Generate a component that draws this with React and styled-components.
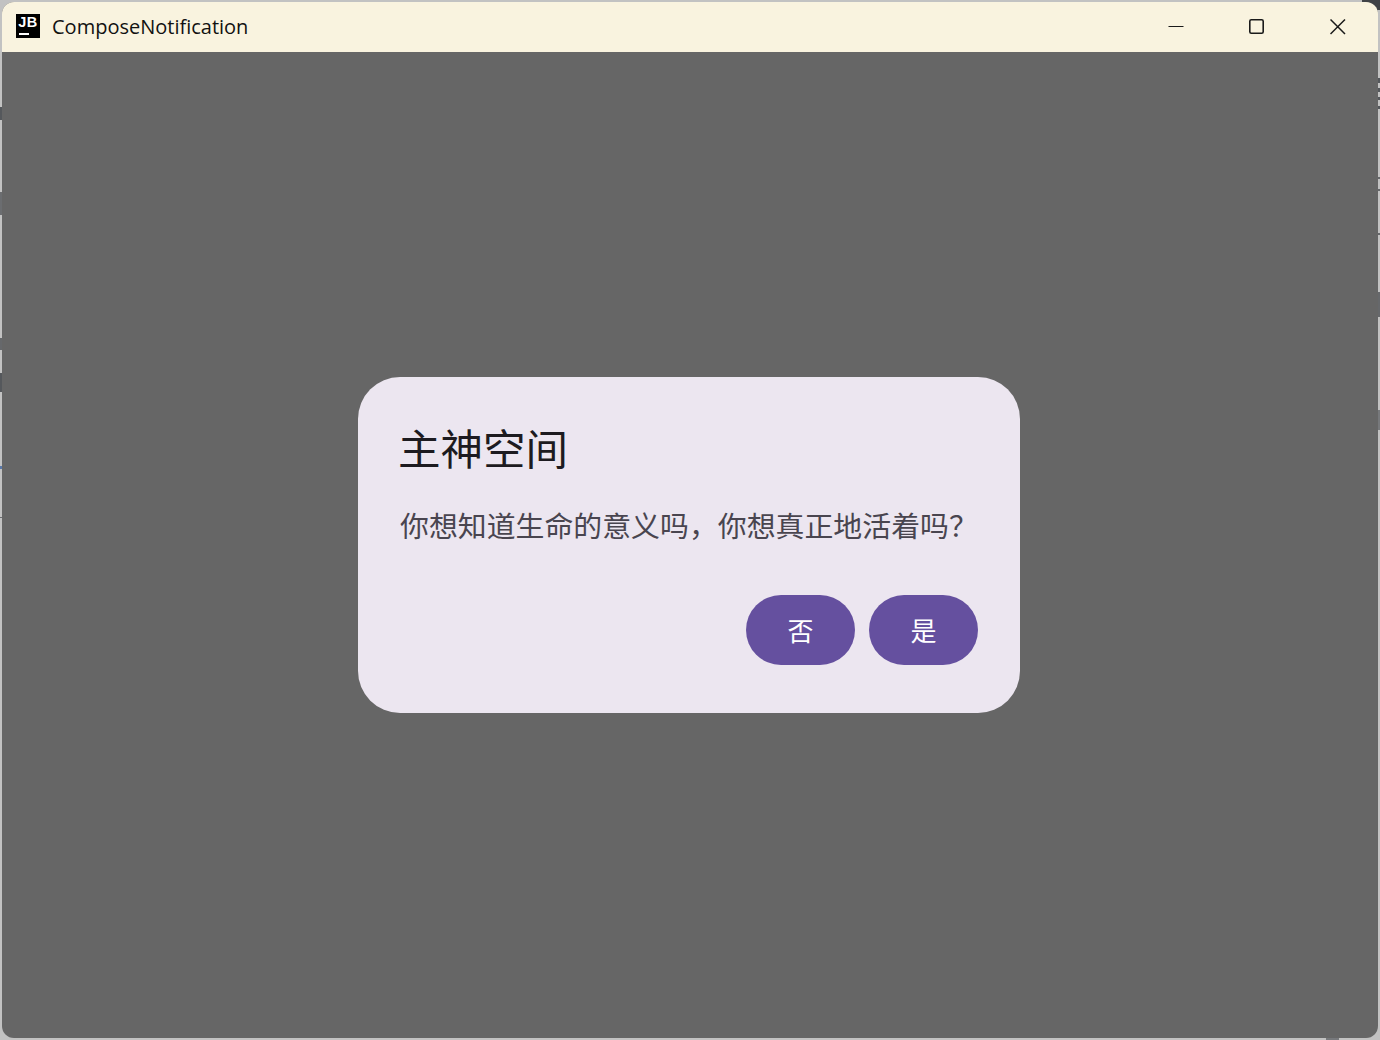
import styled, { createGlobalStyle } from "styled-components";

const cjk = `"Noto Sans CJK SC", "Noto Sans", sans-serif`;

// bits of the desktop that show around the window edge
const edgeSpecks = [
  { left: 0, top: 107, width: 2, height: 13, color: "#55585c" },
  { left: 0, top: 192, width: 2, height: 23, color: "#6b6d70" },
  { left: 0, top: 338, width: 2, height: 12, color: "#66686b" },
  { left: 0, top: 373, width: 2, height: 19, color: "#55585c" },
  { left: 0, top: 466, width: 2, height: 3, color: "#5a78a8" },
  { left: 0, top: 517, width: 2, height: 1, color: "#6b6d70" },
  { left: 1378, top: 78, width: 2, height: 5, color: "#55585c" },
  { left: 1378, top: 88, width: 2, height: 4, color: "#55585c" },
  { left: 1378, top: 97, width: 2, height: 3, color: "#55585c" },
  { left: 1378, top: 106, width: 2, height: 3, color: "#55585c" },
  { left: 1378, top: 177, width: 2, height: 2, color: "#66686b" },
  { left: 1378, top: 189, width: 2, height: 2, color: "#66686b" },
  { left: 1378, top: 233, width: 2, height: 2, color: "#66686b" },
  { left: 1378, top: 292, width: 2, height: 25, color: "#66686b" },
  { left: 1378, top: 410, width: 2, height: 20, color: "#77797c" },
  { left: 1326, top: 1038, width: 13, height: 2, color: "#77797c" },
];

const App = () => {
  return (
    <Page>
      <GlobalStyle />
      {edgeSpecks.map((s) => (
        <EdgeSpeck
          key={`${s.left}-${s.top}`}
          style={{ left: s.left, top: s.top, width: s.width, height: s.height, background: s.color }}
        />
      ))}
      <CornerSpeck />
      <Window>
        <TitleBar>
          <AppLogo>
            <LogoText>JB</LogoText>
            <LogoBar />
          </AppLogo>
          <WindowTitle>ComposeNotification</WindowTitle>
          <WindowControls>
            <ControlButton aria-label="minimize">
              <svg width="16" height="16" viewBox="0 0 16 16">
                <path d="M0.5 7.5H15.5" stroke="#1a1a1a" strokeWidth="1.2" fill="none" />
              </svg>
            </ControlButton>
            <ControlButton aria-label="maximize">
              <svg width="16" height="16" viewBox="0 0 16 16">
                <rect x="0.8" y="0.8" width="13.4" height="13.4" rx="1.5" stroke="#1a1a1a" strokeWidth="1.6" fill="none" />
              </svg>
            </ControlButton>
            <ControlButton aria-label="close">
              <svg width="16" height="16" viewBox="0 0 16 16">
                <path d="M0.5 0.5L15 15M15 0.5L0.5 15" stroke="#1a1a1a" strokeWidth="1.5" fill="none" />
              </svg>
            </ControlButton>
          </WindowControls>
        </TitleBar>
        <Scrim>
          <Dialog>
            <DialogTitle>主神空间</DialogTitle>
            <DialogBody>你想知道生命的意义吗，你想真正地活着吗？</DialogBody>
            <DialogActions>
              <ActionButton>否</ActionButton>
              <ActionButton>是</ActionButton>
            </DialogActions>
          </Dialog>
        </Scrim>
      </Window>
    </Page>
  );
};

export default App;

const GlobalStyle = createGlobalStyle`
  html, body {
    margin: 0;
    padding: 0;
    background: #c2c2c2;
  }
`;

const Page = styled.div`
  position: relative;
  width: 1380px;
  height: 1040px;
  box-sizing: border-box;
  padding: 2px;
  background: #c2c2c2;
  overflow: hidden;
`;

const EdgeSpeck = styled.span`
  position: absolute;
`;

const CornerSpeck = styled.span`
  position: absolute;
  top: 0;
  right: 0;
  width: 18px;
  height: 10px;
  background: #3f4246;
`;

const Window = styled.div`
  position: relative;
  width: 100%;
  height: 100%;
  display: flex;
  flex-direction: column;
  border-radius: 12px;
  overflow: hidden;
  background: #666666;
`;

const TitleBar = styled.div`
  height: 50px;
  flex: none;
  display: flex;
  align-items: center;
  padding-left: 14px;
  background: #f9f3df;
`;

const AppLogo = styled.div`
  width: 24px;
  height: 24px;
  flex: none;
  display: flex;
  flex-direction: column;
  padding: 3px 2px 0;
  box-sizing: border-box;
  background: #000000;
  margin-top: -2px;
`;

const LogoText = styled.span`
  font-family: "Liberation Sans", sans-serif;
  font-size: 14.5px;
  font-weight: 700;
  line-height: 11px;
  letter-spacing: 0.6px;
  color: #ffffff;
  text-align: center;
`;

const LogoBar = styled.span`
  width: 10px;
  height: 2px;
  margin-top: 5px;
  margin-left: 1px;
  background: #ffffff;
`;

const WindowTitle = styled.span`
  margin-left: 12px;
  margin-top: -2px;
  font-family: "Open Sans", "Noto Sans", sans-serif;
  font-size: 20px;
  color: #111111;
`;

const WindowControls = styled.div`
  margin-left: auto;
  display: flex;
  height: 100%;
`;

const ControlButton = styled.div`
  width: 81px;
  height: 100%;
  display: flex;
  align-items: center;
  justify-content: center;
  box-sizing: border-box;
`;

const Scrim = styled.div`
  flex: 1;
  display: flex;
  align-items: center;
  justify-content: center;
  padding-right: 2px;
`;

const Dialog = styled.div`
  width: 662px;
  height: 336px;
  box-sizing: border-box;
  padding: 42px;
  display: flex;
  flex-direction: column;
  border-radius: 42px;
  background: #ece6f0;
`;

const DialogTitle = styled.div`
  font-family: ${cjk};
  font-size: 42.5px;
  font-weight: 400;
  line-height: 60px;
  margin-top: -2px;
  margin-left: -2px;
  color: #1d1b20;
`;

const DialogBody = styled.div`
  font-family: ${cjk};
  font-size: 28.9px;
  font-weight: 400;
  line-height: 40px;
  margin-top: 27px;
  white-space: nowrap;
  color: #49454f;
`;

const DialogActions = styled.div`
  margin-top: auto;
  display: flex;
  justify-content: flex-end;
  gap: 14px;
  margin-bottom: 6px;
`;

const ActionButton = styled.div`
  width: 109px;
  height: 70px;
  display: flex;
  align-items: center;
  justify-content: center;
  padding-bottom: 2px;
  box-sizing: border-box;
  border-radius: 35px;
  font-family: ${cjk};
  font-size: 26px;
  color: #ffffff;
  background: #65509f;
`;
